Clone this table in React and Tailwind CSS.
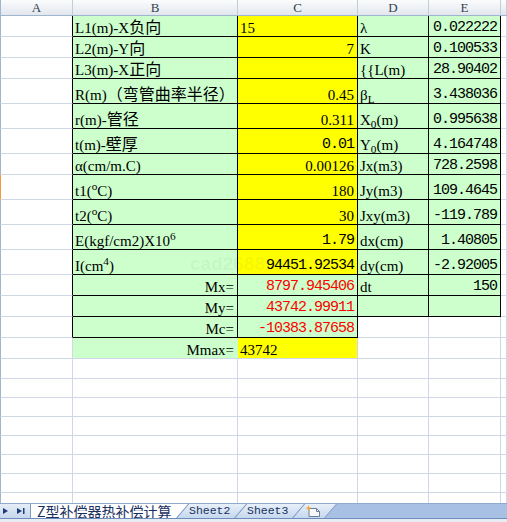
import React from "react";

// fonts used in the sheet
const SERIF = "[font-family:'Liberation_Serif','Noto_Sans_CJK_SC',serif] text-[15px] leading-[16px]";
const MONO = "[font-family:'Liberation_Mono','Noto_Sans_CJK_SC',monospace] text-[15px] tracking-[-1px] leading-[16px]";

const COLS = "grid grid-cols-[73px_165px_120px_71px_72px_1fr]";

const Zh = ({ children }) => <span className="text-[16px]">{children}</span>;

// B label, C value, D label, E value for every filled row
const rows = [
  { h: "h-[21px]", b: <>L1(m)-X<Zh>负向</Zh></>, c: "15", cLeft: true, d: "λ", e: "0.022222" },
  { h: "h-[21px]", b: <>L2(m)-Y<Zh>向</Zh></>, c: "7", d: "K", e: "0.100533" },
  { h: "h-[21px]", b: <>L3(m)-X<Zh>正向</Zh></>, c: "", d: "{{L(m)", e: "28.90402" },
  { h: "h-[25px]", b: <>R(m)<Zh>（弯管曲率半径）</Zh></>, c: "0.45", d: <>β<sub>L</sub></>, e: "3.438036" },
  { h: "h-[25px]", b: <>r(m)-<Zh>管径</Zh></>, c: "0.311", d: <>X<sub>0</sub>(m)</>, e: "0.995638" },
  { h: "h-[25px]", b: <>t(m)-<Zh>壁厚</Zh></>, c: "0.01", mono: true, d: <>Y<sub>0</sub>(m)</>, e: "4.164748" },
  { h: "h-[21px]", b: "α(cm/m.C)", c: "0.00126", d: "Jx(m3)", e: "728.2598" },
  { h: "h-[25px]", b: <>t1(<sup>o</sup>C)</>, c: "180", d: "Jy(m3)", e: "109.4645", mark: true },
  { h: "h-[25px]", b: <>t2(<sup>o</sup>C)</>, c: "30", d: "Jxy(m3)", e: "-119.789" },
  { h: "h-[25px]", b: <>E(kgf/cm2)X10<sup>6</sup></>, c: "1.79", mono: true, d: "dx(cm)", e: "1.40805" },
  { h: "h-[25px]", b: <>I(cm<sup>4</sup>)</>, c: "94451.92534", mono: true, d: "dy(cm)", e: "-2.92005" },
  { h: "h-[21px]", b: "Mx=", bRight: true, c: "8797.945406", red: true, d: "dt", e: "150" },
  { h: "h-[21px]", b: "My=", bRight: true, c: "43742.99911", red: true, d: "", e: "" },
  { h: "h-[21px]", b: "Mc=", bRight: true, c: "-10383.87658", red: true },
  { h: "h-[21px]", b: "Mmax=", bRight: true, c: "43742", cLeft: true, last: true },
];

const emptyRows = ["h-[20px]", "h-[19px]", "h-[19px]", "h-[19px]", "h-[19px]", "h-[19px]", "h-[19px]", "h-[19px]"];

function Cell({ bg = "bg-white", rBlack, bBlack, rCls, bCls, right, font = SERIF, color = "text-black", extra = "", children }) {
  const r = rCls || (rBlack ? "border-r-black" : "border-r-[#d0d7e5]");
  const b = bCls || (bBlack ? "border-b-black" : "border-b-[#d0d7e5]");
  return (
    <div
      className={`flex items-end overflow-hidden whitespace-nowrap border-r border-b ${color} ${bg} ${r} ${b} ${
        right ? "justify-end pr-[3px]" : "justify-start pl-[2px]"
      } ${font} ${extra}`}
    >
      <span>{children}</span>
    </div>
  );
}

function SheetRow({ row, i }) {
  const bcBox = !row.last; // B and C boxed in black through the Mc row
  const deBox = i <= 12; // D and E boxed through the row after dt
  const deBg = deBox ? "bg-[#ccffcc]" : "bg-white";
  const cBg = row.red ? "bg-[#ccffcc]" : "bg-[#ffff00]";
  return (
    <div className={`${COLS} ${row.h}`}>
      <Cell
        rBlack={bcBox}
        extra={`border-l ${row.mark ? "border-l-[#f39a3c]" : "border-l-[#9eb6ce]"}`}
      />
      <Cell
        bg="bg-[#ccffcc]"
        rBlack={bcBox}
        bBlack={bcBox}
        rCls={row.last ? "border-r-[#ccffcc]" : ""}
        right={row.bRight}
      >
        {row.b}
      </Cell>
      <Cell
        bg={cBg}
        rBlack={bcBox}
        bBlack={bcBox}
        right={!row.cLeft}
        font={row.mono || row.red ? MONO : SERIF}
        color={row.red ? "text-[#ff0000]" : "text-black"}
      >
        {row.c}
      </Cell>
      <Cell bg={deBg} rBlack={deBox} bBlack={deBox}>
        {row.d}
      </Cell>
      <Cell bg={deBg} rBlack={deBox} bBlack={deBox} right font={MONO}>
        {row.e}
      </Cell>
      <Cell />
    </div>
  );
}

function Tab({ first, w, z, inner, children }) {
  const shape = first
    ? "[clip-path:polygon(0_0,100%_0,calc(100%_-_12px)_100%,0_100%)]"
    : "[clip-path:polygon(12px_0,100%_0,calc(100%_-_12px)_100%,0_100%)]";
  return (
    <div className={`relative h-full ${w} ${z} ${first ? "" : "-ml-[12px]"} ${shape} bg-[#7d9ac4]`}>
      <div className={`absolute inset-y-0 left-0 right-[1px] flex items-center ${shape} ${inner}`}>{children}</div>
    </div>
  );
}

function TabBar() {
  return (
    <>
      <div className="flex h-[15px] border-t border-t-[#8fa9cf] bg-[#a7c0e3]">
        <div className="flex w-[31px] items-center border-r border-r-[#7d9ac4] bg-linear-to-b from-[#e6edf7] to-[#c7d7ee] pl-[3px]">
          <svg width="26" height="8" viewBox="0 0 26 8">
            <path d="M0 1 L5 4 L0 7 Z" fill="#1c3d78" />
            <path d="M14 1 L19 4 L14 7 Z" fill="#1c3d78" />
            <rect x="20" y="1" width="1.5" height="6" fill="#1c3d78" />
          </svg>
        </div>
        <Tab first w="w-[158px]" z="z-30" inner="bg-white pl-[6px]">
          <span className="[font-family:'Noto_Sans_CJK_SC',sans-serif] text-[14px] leading-none text-[#1a2f5e]">
            Z型补偿器热补偿计算
          </span>
        </Tab>
        <Tab w="w-[70px]" z="z-20" inner="bg-linear-to-b from-[#e8eff9] to-[#c6d8ef] pl-[12px]">
          <span className="[font-family:'Liberation_Mono',monospace] text-[11.5px] leading-none text-[#17305c]">Sheet2</span>
        </Tab>
        <Tab w="w-[70px]" z="z-10" inner="bg-linear-to-b from-[#e8eff9] to-[#c6d8ef] pl-[12px]">
          <span className="[font-family:'Liberation_Mono',monospace] text-[11.5px] leading-none text-[#17305c]">Sheet3</span>
        </Tab>
        <Tab w="w-[44px]" z="z-0" inner="bg-linear-to-b from-[#e8eff9] to-[#c6d8ef] pl-[12px]">
          <svg width="16" height="12" viewBox="0 0 16 12">
            <path d="M4 3.5 H11.5 L14.5 6.5 V11.5 H4 Z" fill="#f6f8fb" stroke="#6d7f98" />
            <path d="M11.5 3.5 V6.5 H14.5" fill="none" stroke="#6d7f98" />
            <path d="M3.5 0 L4.3 2.4 L7 3 L4.3 3.7 L3.5 6.3 L2.7 3.7 L0 3 L2.7 2.4 Z" fill="#f3a31e" />
          </svg>
        </Tab>
      </div>
      <div className="h-[1px] bg-[#6f8dbb]" />
      <div className="h-[3px] bg-[#e7ecf4]" />
    </>
  );
}

export default function App() {
  const headers = ["A", "B", "C", "D", "E", ""];
  return (
    <div className="flex h-[522px] w-[507px] flex-col overflow-hidden bg-white">
      <div className="relative h-[503px] overflow-hidden">
        {/* column headers */}
        <div className={`${COLS} h-[16px] border-b border-b-[#9eb6ce] bg-linear-to-b from-[#fbfcfd] to-[#e2e7ee]`}>
          {headers.map((h, i) => (
            <div
              key={i}
              className={`flex items-center justify-center border-r border-r-[#c3ccd8] [font-family:'Liberation_Serif',serif] text-[13px] leading-none text-[#34404c] ${
                i === 0 ? "border-l border-l-[#9eb6ce]" : ""
              }`}
            >
              {h}
            </div>
          ))}
        </div>

        {rows.map((row, i) => (
          <SheetRow key={i} row={row} i={i} />
        ))}

        {emptyRows.map((h, i) => (
          <div key={i} className={`${COLS} ${h}`}>
            <Cell extra="border-l border-l-[#9eb6ce]" />
            <Cell />
            <Cell />
            <Cell />
            <Cell />
            <Cell />
          </div>
        ))}

        {/* faint watermark over the sheet */}
        <div className="pointer-events-none absolute left-[190px] top-[250px] [font-family:'Liberation_Sans',sans-serif] text-[19px] font-bold text-black/[0.05]">
          cad2688.com
        </div>
      </div>
      <TabBar />
    </div>
  );
}
